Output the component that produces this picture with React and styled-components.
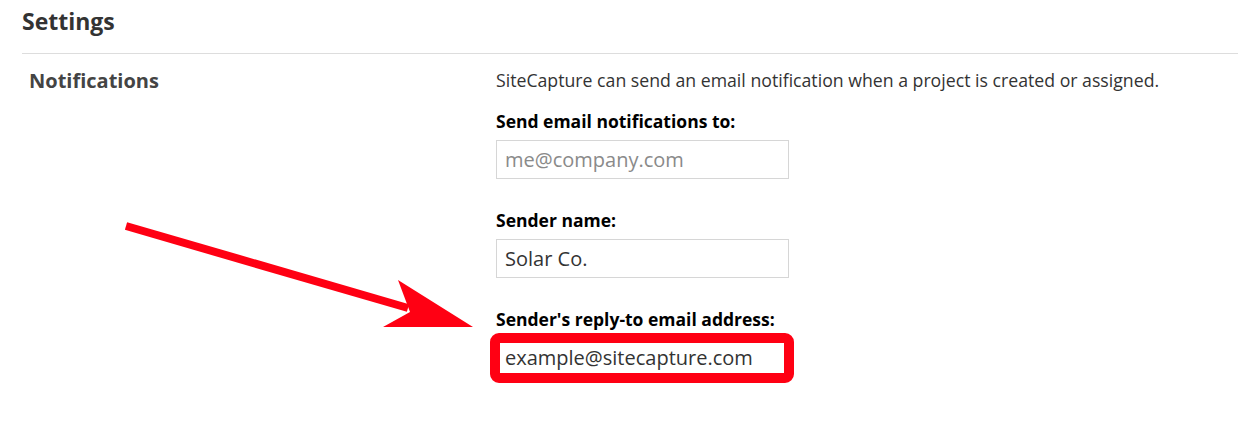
import React from 'react'
import styled, { createGlobalStyle } from 'styled-components'

const GlobalStyle = createGlobalStyle`
    html, body {
        margin: 0;
        padding: 0;
        background: #fff;
    }
    body {
        font-family: "Open Sans", "Noto Sans", sans-serif;
        color: #333;
    }
`

const Page = styled.div`
    position: relative;
    width: 1238px;
    height: 438px;
    overflow: hidden;
    padding-left: 22px;
    box-sizing: border-box;
`

const Title = styled.h1`
    margin: 0;
    padding: 4px 0 15px;
    font-size: 23px;
    font-weight: 700;
    line-height: 34px;
    color: #333;
    border-bottom: 1px solid #dddddd;
`

const Section = styled.section`
    display: grid;
    grid-template-columns: 474px 1fr;
    padding-top: 13px;
`

const SectionName = styled.h2`
    margin: 0;
    padding-left: 7px;
    font-size: 20px;
    font-weight: 700;
    line-height: 28px;
    color: #444;
`

const Content = styled.div`
    display: flex;
    flex-direction: column;
`

const Intro = styled.p`
    margin: 0 0 17px;
    font-size: 17.7px;
    line-height: 26px;
    color: #333;
`

const Field = styled.div`
    display: flex;
    flex-direction: column;
    gap: 8px;
    margin-bottom: 30px;
`

const Label = styled.label`
    font-size: 17.5px;
    font-weight: 700;
    line-height: 22px;
    color: #000;
`

const InputWrap = styled.div`
    position: relative;
    width: 293px;
`

const Input = styled.input`
    display: block;
    box-sizing: border-box;
    width: 293px;
    height: 39px;
    padding: 0 8px;
    border: 1px solid #d6d6d6;
    font-family: "Open Sans", "Noto Sans", sans-serif;
    font-size: 20px;
    color: #333;
    background: #fff;
    outline: none;

    &::placeholder {
        color: #8a8a8a;
    }
`

const Highlight = styled.div`
    position: absolute;
    left: -6px;
    top: -5px;
    width: 304px;
    height: 50px;
    box-sizing: border-box;
    border: 10px solid #ff0013;
    border-radius: 9px;
    pointer-events: none;
`

const Arrow = styled.svg`
    position: absolute;
    left: 0;
    top: 0;
    pointer-events: none;
`

export default function App() {
    return (
        <>
            <GlobalStyle />
            <Page>
                <Title>Settings</Title>
                <Section>
                    <SectionName>Notifications</SectionName>
                    <Content>
                        <Intro>SiteCapture can send an email notification when a project is created or assigned.</Intro>
                        <Field>
                            <Label>Send email notifications to:</Label>
                            <InputWrap>
                                <Input type="email" placeholder="me@company.com" />
                            </InputWrap>
                        </Field>
                        <Field>
                            <Label>Sender name:</Label>
                            <InputWrap>
                                <Input type="text" defaultValue="Solar Co." />
                            </InputWrap>
                        </Field>
                        <Field>
                            <Label>Sender's reply-to email address:</Label>
                            <InputWrap>
                                <Input type="email" defaultValue="example@sitecapture.com" />
                                <Highlight />
                            </InputWrap>
                        </Field>
                    </Content>
                </Section>
                <Arrow width="1238" height="438" viewBox="0 0 1238 438">
                    <line x1="126" y1="226" x2="408" y2="308" stroke="#ff0013" strokeWidth="8" />
                    <polygon points="473,327 398,280 410,312 383,327" fill="#ff0013" />
                </Arrow>
            </Page>
        </>
    )
}
